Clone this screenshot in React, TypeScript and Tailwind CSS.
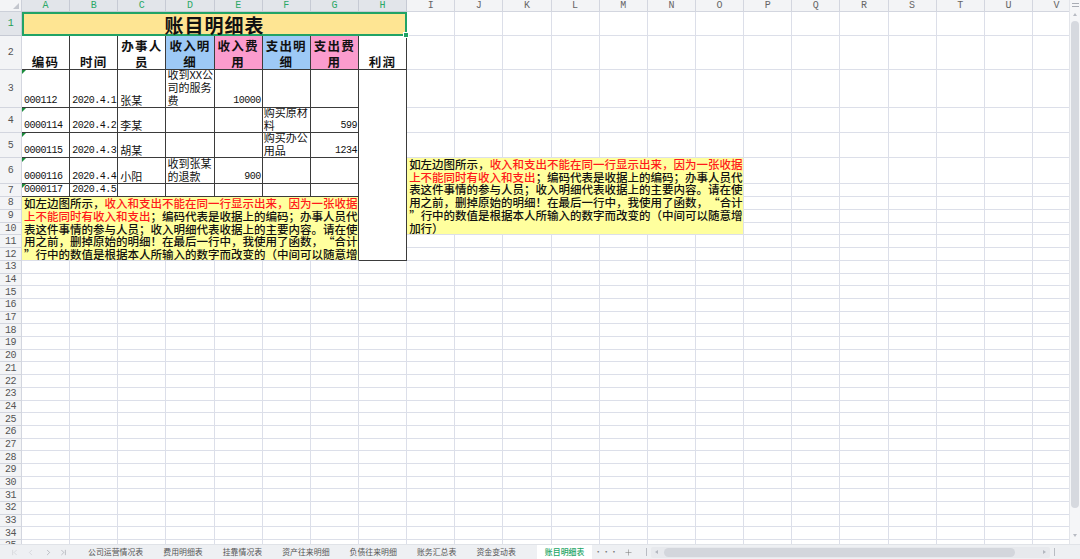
import { ChevronFirst, ChevronLast, ChevronLeft, ChevronRight, Plus } from 'lucide-react';
import clsx from 'clsx';
import type { ReactNode } from 'react';

// ─── Sheet data ──────────────────────────────────────────────────────────────

const COLUMNS = 'ABCDEFGHIJKLMNOPQRSTUV'.split('');
const SELECTED_COLUMNS = 8;

interface Entry {
  code: string;
  date: string;
  person?: string;
  income?: string[];
  incomeAmount?: string;
  expense?: string[];
  expenseAmount?: string;
}

const ENTRIES: Entry[] = [
  { code: '000112', date: '2020.4.1', person: '张某', income: ['收到XX公', '司的服务', '费'], incomeAmount: '10000' },
  { code: '0000114', date: '2020.4.2', person: '李某', expense: ['购买原材', '料'], expenseAmount: '599' },
  { code: '0000115', date: '2020.4.3', person: '胡某', expense: ['购买办公', '用品'], expenseAmount: '1234' },
  { code: '0000116', date: '2020.4.4', person: '小阳', income: ['收到张某', '的退款'], incomeAmount: '900' },
  { code: '0000117', date: '2020.4.5' },
];

interface Run {
  text: string;
  red?: boolean;
  quote?: 'open' | 'close';
}

// line breaks follow the sheet's own wrapping
const NOTE: Run[][] = [
  [{ text: '如左边图所示，' }, { text: '收入和支出不能在同一行显示出来，因为一张收据', red: true }],
  [{ text: '上不能同时有收入和支出', red: true }, { text: '；编码代表是收据上的编码；办事人员代' }],
  [{ text: '表这件事情的参与人员；收入明细代表收据上的主要内容。请在使' }],
  [{ text: '用之前，删掉原始的明细！在最后一行中，我使用了函数，' }, { text: '“', quote: 'open' }, { text: '合计' }],
  [{ text: '”', quote: 'close' }, { text: '行中的数值是根据本人所输入的数字而改变的（中间可以随意增' }],
  [{ text: '加行）' }],
];

const SHEETS = ['公司运营情况表', '费用明细表', '挂靠情况表', '资产往来明细', '负债往来明细', '账务汇总表', '资金变动表'];

const GRID_LINE = 'border-r border-b border-[#dcdfe9]';
const INK_LINE = 'border-r border-b border-[#3b3b3b]';
const MONO = "font-['Liberation_Mono',monospace] text-[10px] tracking-[-0.5px]";

// ─── Cells ───────────────────────────────────────────────────────────────────

function blanks(count: number, key: string): ReactNode[] {
  return Array.from({ length: count }, (_, i) => <div key={`${key}-${i}`} className={GRID_LINE} />);
}

function RowHead({ n, active = false }: { n: number; active?: boolean }): React.JSX.Element {
  return (
    <div
      className={clsx(
        "flex items-center justify-center border-r border-b font-['Liberation_Mono',monospace] text-[10px] tracking-[-0.6px]",
        active ? 'border-[#c6cad4] bg-[#e2e5ea] text-[#1f9d55]' : 'border-[#d3d6df] bg-[#f3f4f6] text-[#555]',
      )}
    >
      {n}
    </div>
  );
}

function HeadCell({ lines, tint }: { lines: string[]; tint?: string }): React.JSX.Element {
  return (
    <div
      className={clsx(
        INK_LINE,
        'flex flex-col items-center justify-end text-[12.5px] leading-[15.5px] font-bold tracking-[1.2px] text-[#111]',
        tint,
      )}
    >
      {lines.map((l) => (
        <span key={l} className="whitespace-nowrap">
          {l}
        </span>
      ))}
    </div>
  );
}

function DataCell({
  children,
  right = false,
  flag = false,
}: {
  children?: ReactNode;
  right?: boolean;
  flag?: boolean;
}): React.JSX.Element {
  return (
    <div
      className={clsx(
        INK_LINE,
        'relative flex flex-col justify-end overflow-hidden px-[1px] text-[11px] leading-[13px] text-[#111]',
        right ? 'items-end' : 'items-start',
      )}
    >
      {flag && (
        <span className="absolute left-0 top-0 h-0 w-0 border-t-[4px] border-r-[4px] border-t-[#1b8c3c] border-r-transparent" />
      )}
      {children}
    </div>
  );
}

function Lines({ lines }: { lines?: string[] }): React.JSX.Element | null {
  if (!lines) return null;
  return (
    <>
      {lines.map((l) => (
        <span key={l} className="whitespace-nowrap">
          {l}
        </span>
      ))}
    </>
  );
}

function Note({ leading }: { leading: string }): React.JSX.Element {
  return (
    <>
      {NOTE.map((line, i) => (
        <div key={i} className={clsx('whitespace-nowrap', leading)}>
          {line.map((run) => (
            <span
              key={run.text}
              className={clsx(
                run.red ? 'text-[#ff1a1a]' : 'text-[#111]',
                run.quote && 'inline-block w-[1em]',
                run.quote === 'open' && 'text-right',
              )}
            >
              {run.text}
            </span>
          ))}
        </div>
      ))}
    </>
  );
}

// ─── Grid ────────────────────────────────────────────────────────────────────

function Sheet(): React.JSX.Element {
  const cells: ReactNode[] = [];

  // column header row
  cells.push(
    <div key="corner" className="relative border-r border-b border-[#ccd0d9] bg-[#f3f4f6]">
      <svg className="absolute right-[2px] bottom-[2px]" width="6" height="6" viewBox="0 0 6 6">
        <polygon points="6,0 6,6 0,6" fill="#c3c6cd" />
      </svg>
    </div>,
  );
  COLUMNS.forEach((c, i) => {
    const active = i < SELECTED_COLUMNS;
    cells.push(
      <div
        key={`col-${c}`}
        className={clsx(
          "flex items-center justify-center border-r border-b font-['Liberation_Mono',monospace] text-[10px] leading-[12px]",
          active ? 'border-[#c6cad4] bg-[#e2e5ea] text-[#2aa866]' : 'border-[#d3d6df] bg-[#f3f4f6] text-[#666]',
        )}
      >
        {c}
      </div>,
    );
  });

  // row 1 – title
  cells.push(<RowHead key="r1" n={1} active />);
  cells.push(
    <div
      key="title"
      className="relative col-span-8 flex items-center justify-center border-2 border-[#21a366] bg-[#fee593] text-[19px] leading-none font-bold tracking-[1px] text-[#111]"
    >
      账目明细表
      <span className="absolute -right-[4px] -bottom-[4px] h-[6px] w-[6px] border border-white bg-[#21a366]" />
    </div>,
  );
  cells.push(...blanks(14, 'r1'));

  // row 2 – headers
  cells.push(<RowHead key="r2" n={2} />);
  cells.push(<HeadCell key="h-a" lines={['编码']} />);
  cells.push(<HeadCell key="h-b" lines={['时间']} />);
  cells.push(<HeadCell key="h-c" lines={['办事人', '员']} />);
  cells.push(<HeadCell key="h-d" lines={['收入明', '细']} tint="bg-[#9dc9f6]" />);
  cells.push(<HeadCell key="h-e" lines={['收入费', '用']} tint="bg-[#fb9ccd]" />);
  cells.push(<HeadCell key="h-f" lines={['支出明', '细']} tint="bg-[#9dc9f6]" />);
  cells.push(<HeadCell key="h-g" lines={['支出费', '用']} tint="bg-[#fb9ccd]" />);
  cells.push(<HeadCell key="h-h" lines={['利润']} />);
  cells.push(...blanks(14, 'r2'));

  // rows 3–7 – entries
  ENTRIES.forEach((e, i) => {
    const row = i + 3;
    cells.push(<RowHead key={`r${row}`} n={row} />);
    cells.push(
      <DataCell key={`a${row}`} flag>
        <span className={clsx(MONO, 'pl-[1px]')}>{e.code}</span>
      </DataCell>,
    );
    cells.push(
      <DataCell key={`b${row}`}>
        <span className={clsx(MONO, 'pl-[1px]')}>{e.date}</span>
      </DataCell>,
    );
    cells.push(
      <DataCell key={`c${row}`}>
        <span className="pl-[1px]">{e.person}</span>
      </DataCell>,
    );
    cells.push(
      <DataCell key={`d${row}`}>
        <Lines lines={e.income} />
      </DataCell>,
    );
    cells.push(
      <DataCell key={`e${row}`} right>
        <span className={MONO}>{e.incomeAmount}</span>
      </DataCell>,
    );
    cells.push(
      <DataCell key={`f${row}`}>
        <Lines lines={e.expense} />
      </DataCell>,
    );
    cells.push(
      <DataCell key={`g${row}`} right>
        <span className={MONO}>{e.expenseAmount}</span>
      </DataCell>,
    );
    if (row === 3) {
      cells.push(<div key="profit" className={clsx(INK_LINE, 'row-span-10 bg-white')} />);
    }
    if (row === 6) {
      cells.push(
        <div
          key="note-right"
          className={clsx(GRID_LINE, 'col-span-7 row-span-5 overflow-hidden bg-[#ffff9e] pl-[2px] text-[11.5px] font-medium')}
        >
          <Note leading="leading-[12.7px]" />
        </div>,
      );
    }
    cells.push(...blanks(row === 6 || row === 7 ? 7 : 14, `r${row}`));
  });

  // rows 8–12 – explanation
  cells.push(<RowHead key="r8" n={8} />);
  cells.push(
    <div
      key="note-left"
      className="col-span-7 row-span-5 overflow-hidden border-r border-b border-r-[#3b3b3b] border-b-[#dcdfe9] bg-[#ffff9e] pl-[2px] text-[11.5px] font-medium"
    >
      <Note leading="leading-[12.8px]" />
    </div>,
  );
  cells.push(...blanks(7, 'r8'));
  for (let row = 9; row <= 12; row++) {
    cells.push(<RowHead key={`r${row}`} n={row} />);
    cells.push(...blanks(row <= 10 ? 7 : 14, `r${row}`));
  }

  // rows 13+ – empty sheet
  for (let row = 13; row <= 35; row++) {
    cells.push(<RowHead key={`r${row}`} n={row} />);
    cells.push(...blanks(COLUMNS.length, `r${row}`));
  }

  return (
    <div className="h-[544px] flex-1 overflow-hidden">
      <div className="grid w-max grid-cols-[22px_repeat(22,48.15px)] grid-rows-[12px_24px_34px_38px_25px_25px_26px_13px_repeat(5,12.8px)_repeat(23,12.7px)]">
        {cells}
      </div>
    </div>
  );
}

// ─── Scrollbars & tabs ───────────────────────────────────────────────────────

function VerticalScrollbar(): React.JSX.Element {
  return (
    <div className="flex h-[544px] w-[11px] flex-col items-center border-l border-[#e3e5ea] bg-[#f5f6f8]">
      <div className="mt-[3px] flex flex-col gap-[2px]">
        <span className="h-[1px] w-[7px] bg-[#a9adb5]" />
        <span className="h-[1px] w-[7px] bg-[#a9adb5]" />
      </div>
      <span className="mt-[6px] h-0 w-0 border-x-[2px] border-b-[3px] border-x-transparent border-b-[#b7bbc3]" />
      <div className="mt-[5px] w-[8px] flex-1 rounded-full bg-[#d6d9df]" />
      <span className="mt-[26px] mb-[7px] h-0 w-0 border-x-[2px] border-t-[3px] border-x-transparent border-t-[#b7bbc3]" />
    </div>
  );
}

function TabBar(): React.JSX.Element {
  return (
    <div className="flex h-[15px] items-center border-t border-[#e0e3e8] bg-[#eef0f3] text-[7.9px] leading-none text-[#555]">
      <div className="flex w-[78px] items-center text-[#8d9199]">
        <ChevronFirst size={9} strokeWidth={1.4} className="ml-[10px] text-[#c3c6cc]" />
        <ChevronLeft size={9} strokeWidth={1.4} className="ml-[7px] text-[#c3c6cc]" />
        <ChevronRight size={9} strokeWidth={1.4} className="ml-[9px]" />
        <ChevronLast size={9} strokeWidth={1.4} className="ml-[6px]" />
      </div>
      {SHEETS.map((s) => (
        <span key={s} className="whitespace-nowrap px-[10px]">
          {s}
        </span>
      ))}
      <span className="ml-[11px] flex h-full items-center whitespace-nowrap bg-white px-[8px] font-medium text-[#22a565]">
        账目明细表
      </span>
      <span className="ml-[2px] text-[#777]">···</span>
      <Plus size={9} strokeWidth={1.4} className="ml-[6px] text-[#777]" />
      <span className="ml-[13px] h-[8px] w-[1px] bg-[#b9bcc3]" />
      <div className="ml-[4px] flex h-[11px] w-[399px] items-center rounded-[2px] bg-[#e7e9ed] px-[4px]">
        <span className="h-0 w-0 border-y-[2px] border-r-[3px] border-y-transparent border-r-[#b3b7bf]" />
        <span className="ml-[6px] h-[9px] w-[351px] rounded-full bg-[#d3d6dc]" />
        <span className="flex-1" />
        <span className="h-0 w-0 border-y-[2px] border-l-[3px] border-y-transparent border-l-[#b3b7bf]" />
      </div>
      <span className="ml-[4px] h-[8px] w-[1px] bg-[#b9bcc3]" />
    </div>
  );
}

// ─── Page ────────────────────────────────────────────────────────────────────

export default function App(): React.JSX.Element {
  return (
    <div className="flex h-[559px] w-[1080px] flex-col overflow-hidden bg-white font-['Noto_Sans_CJK_SC','Noto_Sans',sans-serif]">
      <div className="flex">
        <Sheet />
        <VerticalScrollbar />
      </div>
      <TabBar />
    </div>
  );
}
